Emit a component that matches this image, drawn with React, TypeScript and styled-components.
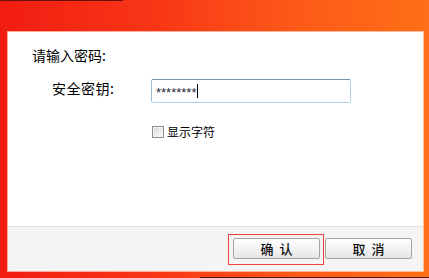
import React from 'react';
import styled, { createGlobalStyle } from 'styled-components';

const GlobalStyle = createGlobalStyle`
  html, body {
    margin: 0;
    padding: 0;
    background: #ffffff;
  }
  body {
    font-family: "Noto Sans CJK SC", "Noto Sans", sans-serif;
  }
`;

const Frame = styled.div`
  position: relative;
  box-sizing: border-box;
  width: 429px;
  height: 278px;
  padding: 32px 6px 7px 8px;
  background: linear-gradient(90deg, #f21d12 0%, #f83516 35%, #fd5a18 70%, #ff6f16 100%);
  display: flex;

  &::before {
    content: '';
    position: absolute;
    left: 0;
    top: 0;
    width: 123px;
    height: 1px;
    background: rgba(60, 10, 5, 0.75);
  }

  &::after {
    content: '';
    position: absolute;
    left: 200px;
    right: 0;
    bottom: 0;
    height: 1px;
    background: rgba(40, 10, 5, 0.8);
  }
`;

const Panel = styled.div`
  flex: 1;
  display: flex;
  flex-direction: column;
  background: #ffffff;
  box-shadow: 0 0 0 1px rgba(255, 225, 210, 0.7);
`;

const Body = styled.div`
  height: 194px;
  box-sizing: border-box;
  padding: 15px 0 0 24px;
  display: flex;
  flex-direction: column;
`;

const Title = styled.div`
  font-size: 14px;
  line-height: 16px;
  color: #000;
`;

const FieldRow = styled.div`
  display: flex;
  align-items: flex-start;
  margin-top: 16px;
`;

const Label = styled.div`
  box-sizing: border-box;
  width: 119px;
  padding-left: 20px;
  font-size: 14px;
  letter-spacing: 0.5px;
  line-height: 18px;
  color: #000;
`;

const Field = styled.div`
  box-sizing: border-box;
  width: 200px;
  height: 24px;
  padding: 0 4px;
  border: 1px solid #b2d1e8;
  border-top-color: #6f94b4;
  border-left-color: #9dbdd6;
  border-radius: 2px;
  display: flex;
  align-items: center;
  font-family: "Liberation Sans", Arial, sans-serif;
  font-size: 13px;
  color: #2a2a3a;
  background: #fff;
`;

const Masked = styled.span`
  line-height: 13px;
  margin-top: 3px;
`;

const Caret = styled.span`
  display: inline-block;
  width: 1px;
  height: 14px;
  margin-left: 1px;
  background: #000;
`;

const CheckRow = styled.label`
  display: flex;
  align-items: center;
  margin-top: 22px;
  margin-left: 120px;
  font-size: 12px;
  line-height: 14px;
  color: #000;
`;

const Box = styled.span`
  box-sizing: border-box;
  width: 12px;
  height: 12px;
  border: 1px solid #8e8e8e;
  margin-right: 3px;
  background: linear-gradient(135deg, #d6d6d6 0%, #ececec 50%, #fbfbfb 100%);
  box-shadow: inset 0 0 0 1px #f4f4f4;
`;

const Footer = styled.div`
  flex: 1;
  background: #f4f4f4;
  border-top: 1px solid #e2e2e2;
  display: flex;
  justify-content: flex-end;
  align-items: flex-start;
  gap: 5px;
  padding: 11px 11px 0 0;
`;

const Button = styled.button<{ $focused?: boolean }>`
  position: relative;
  width: 87px;
  height: 21px;
  padding: 0;
  border: 1px solid #a3a3a3;
  border-radius: 2px;
  background: linear-gradient(180deg, #fefefe 0%, #f3f3f3 50%, #e6e6e6 100%);
  font-family: "Noto Sans CJK SC", sans-serif;
  font-size: 13px;
  font-weight: 500;
  line-height: 19px;
  color: #111;
  white-space: pre;

  ${(p) =>
    p.$focused &&
    `
    &::after {
      content: '';
      position: absolute;
      left: -6px;
      right: -5px;
      top: -5px;
      bottom: -7px;
      border: 1px solid #f04040;
    }
  `}
`;

export default function App() {
  return (
    <>
      <GlobalStyle />
      <Frame>
        <Panel>
          <Body>
            <Title>请输入密码:</Title>
            <FieldRow>
              <Label>安全密钥:</Label>
              <Field>
                <Masked>********</Masked>
                <Caret />
              </Field>
            </FieldRow>
            <CheckRow>
              <Box />
              显示字符
            </CheckRow>
          </Body>
          <Footer>
            <Button $focused>{'确  认'}</Button>
            <Button>{'取  消'}</Button>
          </Footer>
        </Panel>
      </Frame>
    </>
  );
}
